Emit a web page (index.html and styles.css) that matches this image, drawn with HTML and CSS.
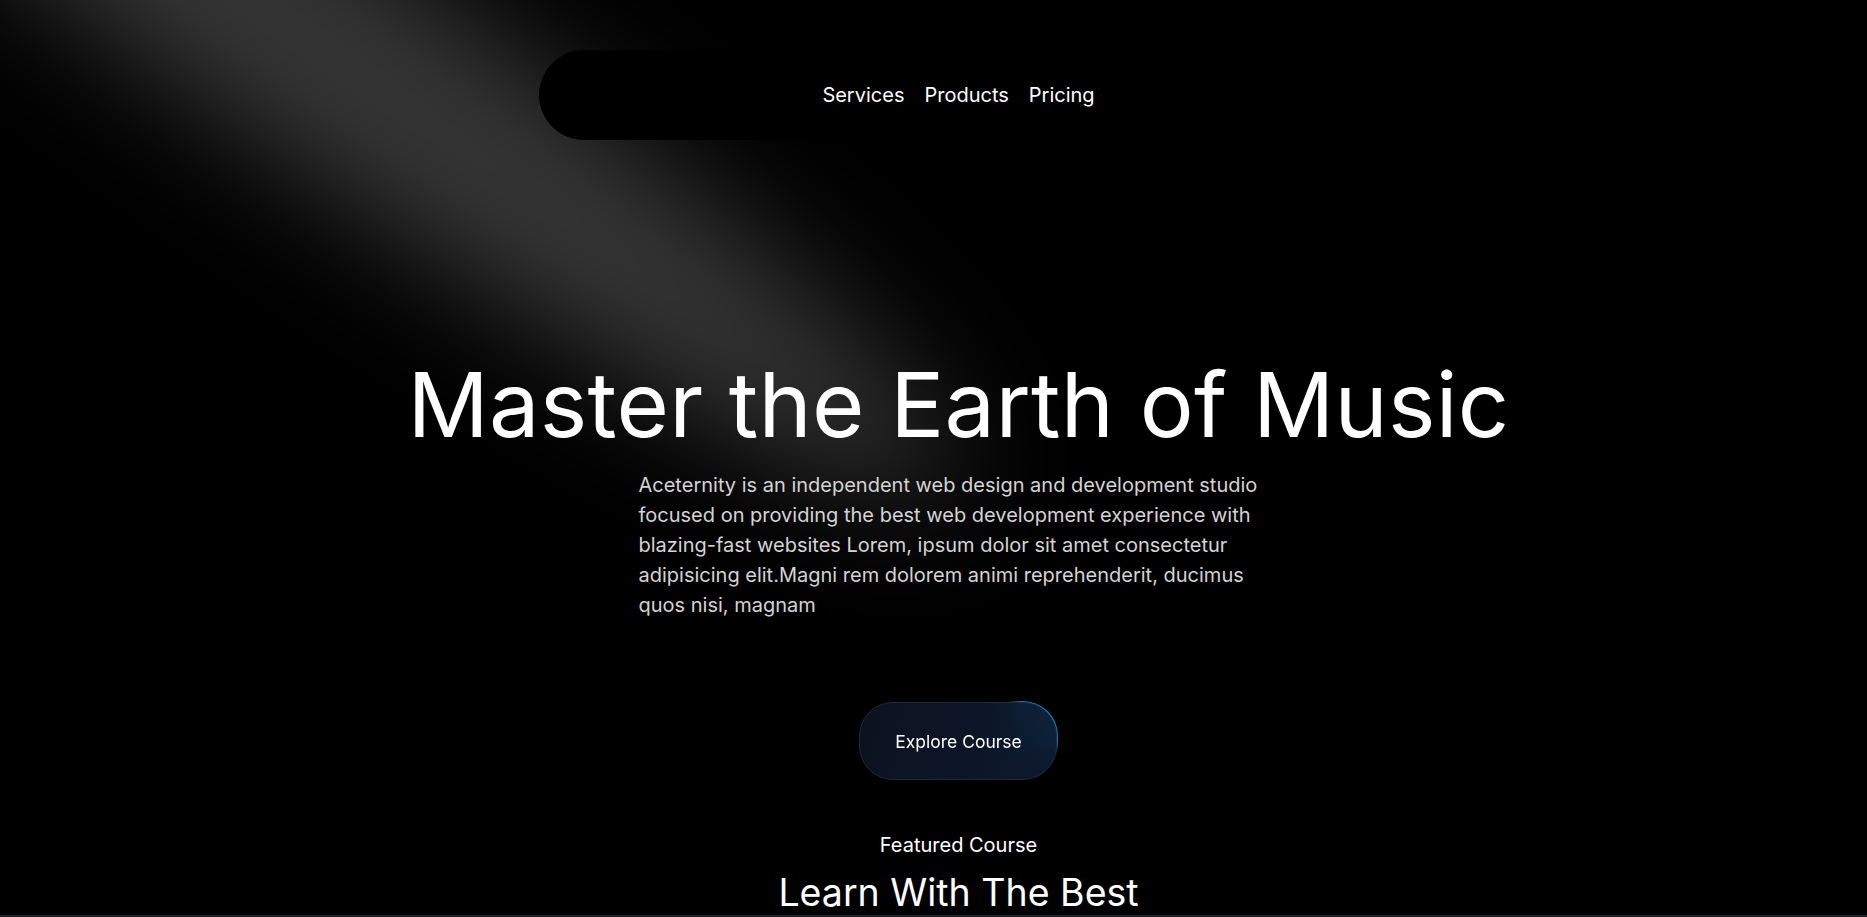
FILE: index.html
```html
<!DOCTYPE html>
<html lang="en">
<head>
<meta charset="utf-8">
<title>Master the Earth of Music</title>
<link rel="stylesheet" href="styles.css">
</head>
<body>
<div class="page">
  <svg class="spotlight" width="1867" height="917" viewBox="0 0 1867 917" fill="none">
    <defs>
      <filter id="spotblur" filterUnits="userSpaceOnUse" x="-3000" y="-3000" width="8000" height="8000">
        <feGaussianBlur stdDeviation="62.5"/>
      </filter>
    </defs>
    <g filter="url(#spotblur)">
      <ellipse cx="0" cy="0" rx="797" ry="113" transform="translate(300 35) rotate(34.7)" fill="#ffffff" fill-opacity="0.21"/>
    </g>
  </svg>

  <div class="content">
    <header class="nav">
      <nav class="nav-pill">
        <a class="nav-link" href="#">Services</a>
        <a class="nav-link" href="#">Products</a>
        <a class="nav-link" href="#">Pricing</a>
      </nav>
    </header>

    <section class="hero">
      <h1 class="hero-title">Master the Earth of Music</h1>
      <p class="hero-text">Aceternity is an independent web design and development studio focused on providing the best web development experience with blazing-fast websites Lorem, ipsum dolor sit amet consectetur adipisicing elit.Magni rem dolorem animi reprehenderit, ducimus quos nisi, magnam</p>
      <a class="btn" href="#">
        <span class="btn-glow"></span>
        <span class="btn-inner">Explore Course</span>
      </a>
    </section>

    <section class="featured">
      <p class="featured-label">Featured Course</p>
      <h2 class="featured-title">Learn With The Best</h2>
    </section>
  </div>
  <div class="next-section"></div>
</div>
</body>
</html>
```

FILE: styles.css
```css
* { box-sizing: border-box; }

html, body {
  margin: 0;
  padding: 0;
  background: #000;
  height: 917px;
  overflow: hidden;
}

body {
  font-family: Inter, "Noto Sans", sans-serif;
  color: #fff;
  -webkit-font-smoothing: antialiased;
}

.page {
  position: relative;
  height: 917px;
  overflow: hidden;
  background: #000;
  display: flex;
  flex-direction: column;
}

.spotlight {
  position: absolute;
  top: 0;
  left: 0;
  z-index: 0;
  pointer-events: none;
}

.content {
  position: relative;
  z-index: 1;
  flex: 1;
  padding-left: 50px;
  display: flex;
  flex-direction: column;
  align-items: center;
}

.nav {
  margin-top: 50px;
  display: flex;
  justify-content: center;
}

.nav-pill {
  width: 840px;
  height: 90px;
  border-radius: 9999px;
  background: #000;
  display: flex;
  justify-content: center;
  align-items: center;
  gap: 20px;
  padding: 0 40px;
}

.nav-link {
  color: #fff;
  text-decoration: none;
  font-size: 20px;
  line-height: 30px;
}

.hero {
  display: flex;
  flex-direction: column;
  align-items: center;
  margin-top: 220px;
}

.hero-title {
  margin: 0;
  font-size: 90px;
  line-height: 90px;
  font-weight: 400;
  letter-spacing: 0.25px;
  color: #fff;
  white-space: nowrap;
}

.hero-text {
  margin: 20px 0 0;
  width: 640px;
  font-size: 20px;
  line-height: 30px;
  color: #d4d4d4;
  text-align: left;
}

.btn {
  position: relative;
  margin-top: 81px;
  width: 200px;
  height: 80px;
  padding: 1px;
  border-radius: 35px;
  overflow: hidden;
  display: block;
  text-decoration: none;
}

.btn-glow {
  position: absolute;
  left: 140px;
  top: -38px;
  width: 100px;
  height: 100px;
  opacity: 0.8;
  background: radial-gradient(#0ea5e9 40%, transparent 60%);
}

.btn-inner {
  position: relative;
  width: 100%;
  height: 100%;
  border-radius: 34px;
  border: 1px solid #1e293b;
  background: linear-gradient(100deg, rgba(13,18,32,0.96), rgba(14,28,50,0.92));
  backdrop-filter: blur(24px);
  display: flex;
  align-items: center;
  justify-content: center;
  color: #fff;
  font-size: 17.5px;
  line-height: 25px;
}

.featured {
  margin-top: 49px;
  display: flex;
  flex-direction: column;
  align-items: center;
}

.featured-label {
  margin: 0;
  font-size: 20px;
  line-height: 30px;
  color: #fff;
}

.featured-title {
  margin: 10px 0 0;
  font-size: 37.5px;
  line-height: 45px;
  font-weight: 400;
  color: #fff;
}

.next-section {
  position: relative;
  z-index: 1;
  height: 3px;
  background: #1c202c;
  flex: none;
}
```
